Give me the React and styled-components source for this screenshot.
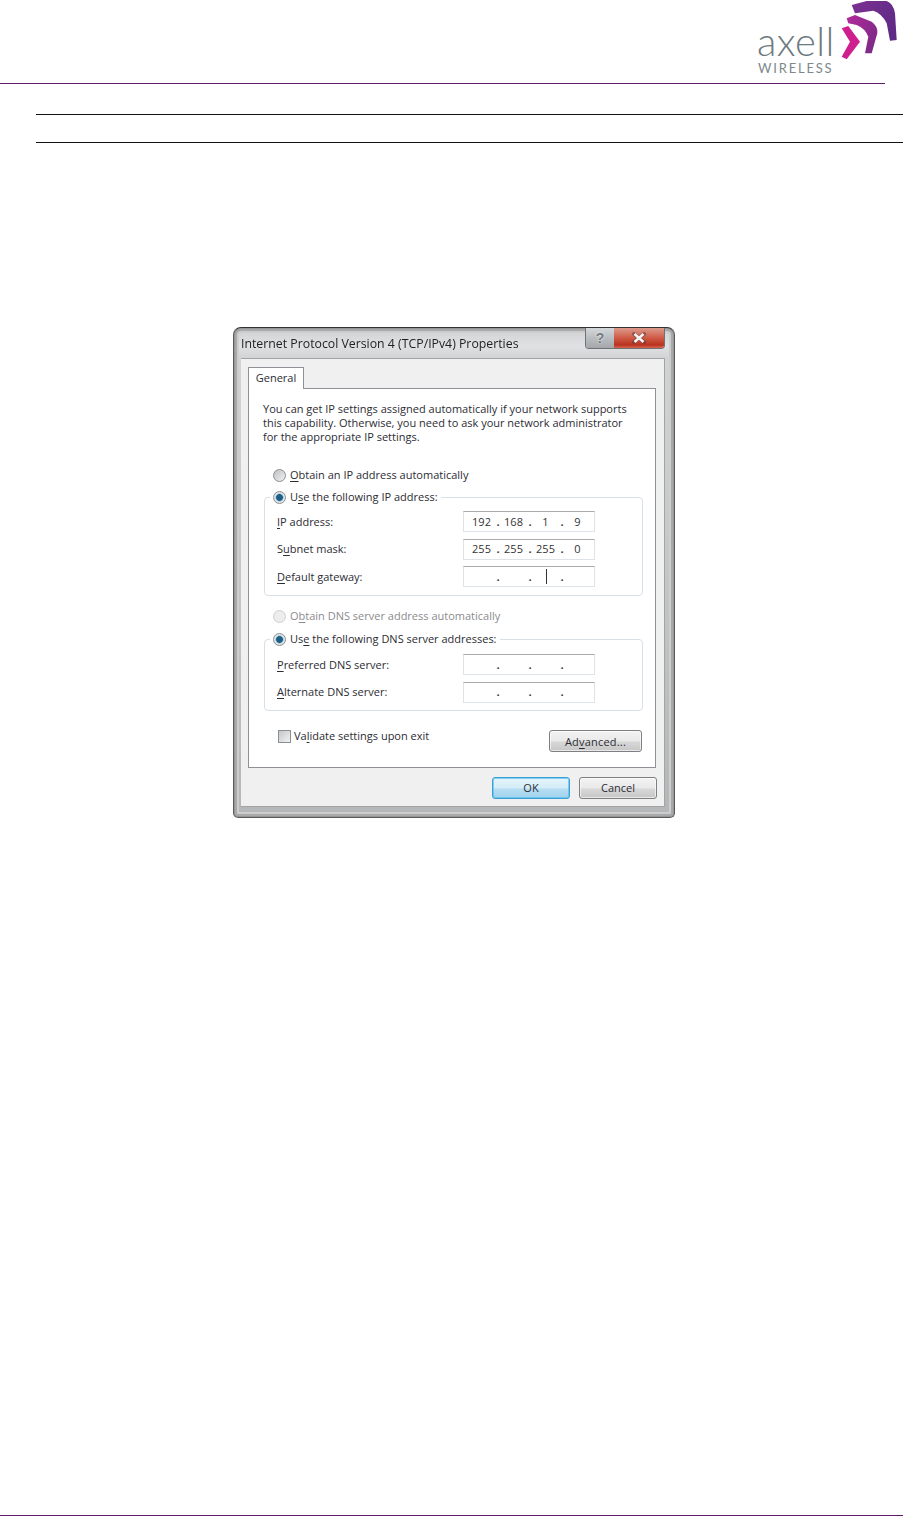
import React from "react";
import styled, { createGlobalStyle } from "styled-components";

const Global = createGlobalStyle`
  html, body { margin: 0; padding: 0; background: #fff; }
  body { font-family: "Open Sans", "Noto Sans", sans-serif; width: 903px; height: 1516px; overflow: hidden; }
`;
const Page = styled.div`
  width: 903px; height: 1516px; display: flex; flex-direction: column; position: relative;
`;
const Header = styled.header`
  height: 83px; width: 885px; display: flex; justify-content: flex-end;
  border-bottom: 1px solid #5f1a6e;
`;
const Logo = styled.div`
  position: relative; width: 148px; height: 83px; margin-right: -12px; flex: none;
  display: flex; flex-direction: column; padding: 24px 0 0 8px; box-sizing: border-box;
`;
const LogoMark = styled.svg`
  position: absolute; left: 0; top: 0; width: 148px; height: 83px;
`;
const LogoName = styled.span`
  font: 300 40px/34px Lato, sans-serif; color: #6d7a80; letter-spacing: 0.4px;
`;
const LogoSub = styled.span`
  margin: 4px 0 0 1px; font: 400 13px/12px Lato, sans-serif; color: #7d888d; letter-spacing: 1.8px;
`;
const Rules = styled.div`
  margin: 30px 0 0 36px; height: 27px; border-top: 1px solid #111; border-bottom: 1px solid #111;
`;
const Dialog = styled.section`
  margin: 184px 0 0 233px; width: 442px; height: 491px; box-sizing: border-box; display: flex; flex-direction: column;
  padding: 0 9px 10px 7px; border-radius: 8px 8px 5px 5px; border: 1px solid #5a5a5a; border-top-color: #333;
  background: linear-gradient(180deg, #cfd1d3 0, #e0e1e2 18px, #d2d3d5 30px, #b4b6b8 100%);
  box-shadow: inset 0 0 0 1px #969696, inset 0 0 0 3px #a9a9a9, inset 0 0 0 5px #cdcdcd;
  color: #2c2c33; font: 400 11px/14px "Open Sans", sans-serif;
  filter: blur(0.35px);
`;
const TitleBar = styled.div`
  height: 30px; flex: none; display: flex; position: relative; align-items: center; padding-top: 1px; box-sizing: border-box;
`;
const Title = styled.h1`
  margin: 0; font: 400 12.3px/16px "Open Sans", sans-serif; color: #222; white-space: nowrap;
`;
const WinButtons = styled.div`
  position: absolute; right: 0; top: 0; display: flex; height: 20px; border: 1px solid #6f7275; border-top: 0; border-radius: 0 0 4px 4px; overflow: hidden;
`;
const WinButton = styled.div`
  width: ${p => p.$w}px; display: flex; align-items: center; justify-content: center;
  background: ${p => p.$bg};
`;
const HelpMark = styled.span`
  font: 700 14px/18px "Liberation Sans", sans-serif; color: #74787b; text-shadow: 0 0 2px #fff;
`;
const Body = styled.div`
  flex: 1; display: flex; flex-direction: column; background: #f0f0f0; padding: 8px 8px 0 7px; border: 1px solid #a2a4a6; border-width: 1px 1px 1px 0;
`;
const Tab = styled.div`
  width: 56px; height: 22px; box-sizing: border-box; margin-bottom: -1px; padding-bottom: 2px; position: relative; z-index: 1; background: #fff;
  border: 1px solid #8e9296; border-bottom: 0; display: flex; align-items: center; justify-content: center;
`;
const Panel = styled.div`
  height: 380px; flex: none; box-sizing: border-box; background: #fff; border: 1px solid #8e9296; padding: 13px 0 0 14px;
`;
const Intro = styled.p`
  margin: 0 0 24px; white-space: pre;
`;
const Option = styled.div`
  display: flex; align-items: center; gap: ${p => p.$gap || 4}px; height: 14px; white-space: nowrap; color: ${p => p.$off ? "#8b8b90" : "inherit"};
`;
const Free = styled(Option)`
  margin: ${p => p.$mt || 0}px 0 0 10px;
`;
const Radio = styled.span`
  width: 13px; height: 13px; box-sizing: border-box; border-radius: 50%; flex: none; border: 1px solid ${p => p.$off ? "#cfcfcf" : "#8a8e92"};
  background: ${p => p.$on
    ? "radial-gradient(circle, #1d5f86 0 3px, #7fb3cd 3.6px, #e4e6e8 4.4px)"
    : p.$off ? "#ededed" : "linear-gradient(135deg, #bfc2c4, #eef0f0)"};
`;
const Group = styled.fieldset`
  margin: ${p => p.$mt}px 0 0 1px; padding: 0; width: 379px; height: ${p => p.$h}px; box-sizing: border-box; border: 1px solid #d8e0e6; border-radius: 4px; min-width: 0;
  display: flex; flex-direction: column; gap: 6.5px;
`;
const Legend = styled.legend`
  padding: 0 3px; margin: 0 0 ${p => p.$mb}px 5px; height: 14px;
`;
const Row = styled.div`
  display: flex; justify-content: space-between; align-items: center; height: 21px; padding: 0 47px 0 12px;
`;
const IpBox = styled.div`
  width: 132px; height: 21px; box-sizing: border-box; display: grid; grid-template-columns: repeat(4, 32px); padding-left: 4px; align-items: center; justify-items: center;
  border: 1px solid #dde3e8; border-top-color: #ababab; background: #fff; color: #333; position: relative;
`;
const Octet = styled.span`
  position: relative; width: 100%; text-align: center; padding-right: 5px; box-sizing: border-box;
  &::after { content: ${p => p.$last ? '""' : '"."'}; position: absolute; right: -2px; top: 0; width: 8px; text-align: center; font-weight: 700; color: #334; }
`;
const Caret = styled.i`
  position: absolute; left: 81.5px; top: 2px; width: 1.5px; height: 15px; background: #333;
`;
const Underline = styled.u`
  text-underline-offset: 1.5px;
`;
const Bottom = styled.div`
  margin: 18px 0 0 15px; width: 364px; display: flex; justify-content: space-between; align-items: flex-start;
`;
const CheckBox = styled.span`
  width: 13px; height: 13px; box-sizing: border-box; border: 1px solid #8c8f92; background: linear-gradient(135deg, #c4c6c8, #f2f2f2);
`;
const Button = styled.div`
  width: ${p => p.$w}px; height: 22px; margin-top: ${p => p.$mt || 0}px; box-sizing: border-box; display: flex; align-items: center; justify-content: center; border-radius: 3px;
  border: 1px solid ${p => p.$primary ? "#3aa0d5" : "#7d7f82"};
  background: ${p => p.$primary ? "linear-gradient(180deg,#e6f5fb 0,#d4edf8 50%,#b6def2 55%,#9fd3ee 100%)" : "linear-gradient(180deg,#f3f3f3 0,#e9e9e9 50%,#d8d8d8 55%,#c6c6c6 100%)"};
  box-shadow: ${p => p.$primary ? "inset 0 0 0 1px rgba(90,190,235,.7)" : "inset 0 0 0 1px rgba(255,255,255,.6)"};
`;
const AdvancedLabel = styled.span`
  letter-spacing: 0.2px; padding-top: 1px;
`;
const Footer = styled.div`
  margin: 9px -1px 0 0; display: flex; justify-content: flex-end; gap: 9px;
`;
const PageEnd = styled.div`
  position: absolute; left: 0; right: 0; bottom: 0; height: 1px; background: #5f1a6e;
`;

const ip = (vals, caret) => (
  <IpBox>
    {vals.map((v, i) => <Octet key={i} $last={i === 3}>{v || "\u00a0"}</Octet>)}
    {caret && <Caret />}
  </IpBox>
);

export default function App() {
  return (
    <Page>
      <Global />
      <Header>
        <Logo>
          <LogoMark viewBox="0 0 148 83">
            <defs>
              <linearGradient id="big" x1="0" y1="0" x2="1" y2="0.6"><stop offset="0" stopColor="#7c3192" /><stop offset="1" stopColor="#5f2a86" /></linearGradient>
              <linearGradient id="mid" x1="0" y1="0" x2="1" y2="0.6"><stop offset="0" stopColor="#b3299b" /><stop offset="1" stopColor="#7e2b88" /></linearGradient>
            </defs>
            <path d="M102.7 5 L117.7 1 L137.7 1 Q144.3 3.3 146 13.3 L147.7 40 L141 40.7 L137.7 23.3 Q132.7 13.3 124.3 10.7 L106 13.3 Z" fill="url(#big)" />
            <path d="M97.7 18.3 L106 15 L122.7 21.7 Q129.3 26.7 128.3 33.3 L122.7 53.3 L116 53.3 L119.3 36.7 Q116 28.3 107.7 25 L99.3 23.3 Z" fill="url(#mid)" />
            <path d="M92.7 28.3 L99.3 26 L111 41.7 L97.7 59.3 L92.7 56.7 L101 41.7 Z" fill="#cf1f8f" />
          </LogoMark>
          <LogoName>axell</LogoName>
          <LogoSub>WIRELESS</LogoSub>
        </Logo>
      </Header>
      <Rules />
      <Dialog>
        <TitleBar>
          <Title>Internet Protocol Version 4 (TCP/IPv4) Properties</Title>
          <WinButtons>
            <WinButton $w={28} $bg="linear-gradient(180deg,#d5d8da,#b9bdc0 50%,#a4a8ab)"><HelpMark>?</HelpMark></WinButton>
            <WinButton $w={50} $bg="linear-gradient(180deg,#dd9a8c,#cf5a45 50%,#b8321f 85%,#d8654e)">
              <svg width="16" height="12" viewBox="0 0 16 12">
                <path d="M3 2 L13 10 M13 2 L3 10" stroke="#5a3a38" strokeWidth="4" strokeLinecap="round" opacity=".55" />
                <path d="M3.5 2 L12.5 10 M12.5 2 L3.5 10" stroke="#f4f2f2" strokeWidth="2.6" />
              </svg>
            </WinButton>
          </WinButtons>
        </TitleBar>
        <Body>
          <Tab>General</Tab>
          <Panel>
            <Intro>{"You can get IP settings assigned automatically if your network supports\nthis capability. Otherwise, you need to ask your network administrator\nfor the appropriate IP settings."}</Intro>
            <Free><Radio /><span><Underline>O</Underline>btain an IP address automatically</span></Free>
            <Group $mt={8} $h={106}>
              <Legend $mb={7}><Option><Radio $on /><span>U<Underline>s</Underline>e the following IP address:</span></Option></Legend>
              <Row><span><Underline>I</Underline>P address:</span>{ip(["192","168","1","9"])}</Row>
              <Row><span>S<Underline>u</Underline>bnet mask:</span>{ip(["255","255","255","0"])}</Row>
              <Row><span><Underline>D</Underline>efault gateway:</span>{ip(["","","",""], true)}</Row>
            </Group>
            <Free $off $mt={13}><Radio $off /><span>O<Underline>b</Underline>tain DNS server address automatically</span></Free>
            <Group $mt={9} $h={79}>
              <Legend $mb={8}><Option><Radio $on /><span>Us<Underline>e</Underline> the following DNS server addresses:</span></Option></Legend>
              <Row><span><Underline>P</Underline>referred DNS server:</span>{ip(["","","",""])}</Row>
              <Row><span><Underline>A</Underline>lternate DNS server:</span>{ip(["","","",""])}</Row>
            </Group>
            <Bottom>
              <Option $gap={3}><CheckBox /><span>Va<Underline>l</Underline>idate settings upon exit</span></Option>
              <Button $w={93} $mt={1}><AdvancedLabel>Ad<Underline>v</Underline>anced...</AdvancedLabel></Button>
            </Bottom>
          </Panel>
          <Footer>
            <Button $w={78} $primary>OK</Button>
            <Button $w={78}>Cancel</Button>
          </Footer>
        </Body>
      </Dialog>
      <PageEnd />
    </Page>
  );
}
